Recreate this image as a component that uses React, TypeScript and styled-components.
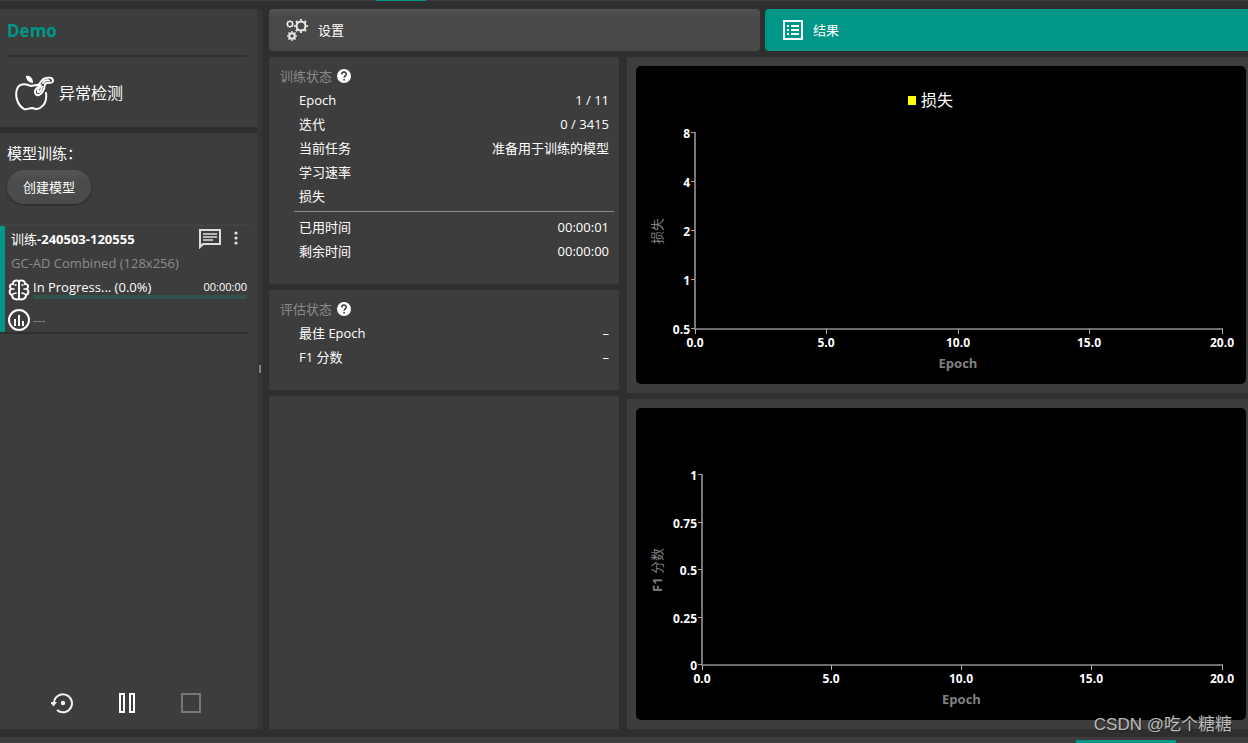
import React from "react";
import styled, { createGlobalStyle } from "styled-components";

const ACCENT = "#009688";
const PANEL = "#3d3d3d";
const DARK = "#2f2f2f";

const GlobalStyle = createGlobalStyle`
  * { box-sizing: border-box; }
  body {
    margin: 0;
    background: ${DARK};
    color: #fff;
    font: 13px/24px "Open Sans", "Noto Sans CJK SC", sans-serif;
  }
  button { font: inherit; color: inherit; border: 0; padding: 0; background: none; cursor: pointer; }
  h1, h2, dl, dd, p { margin: 0; font-size: inherit; font-weight: 400; }
  svg { display: block; flex: none; }
`;

const Page = styled.div`
  position: relative;
  min-height: 100vh;
  display: flex;
  flex-direction: column;
  overflow: hidden;
`;

const TopEdge = styled.div`
  height: 1px;
  background: ${PANEL};
  padding-left: 376px;
  &::after { content: ""; display: block; width: 50px; height: 1px; background: ${ACCENT}; }
`;

const BottomEdge = styled.div`
  height: 6px;
  background: ${PANEL};
  display: flex;
  justify-content: flex-end;
  align-items: flex-end;
  padding-right: 72px;
  &::after { content: ""; width: 100px; height: 3px; background: ${ACCENT}; }
`;

const Body = styled.div`
  flex: 1;
  display: flex;
  padding: 8px 0;
`;

const Sidebar = styled.aside`
  flex: 0 0 257px;
  display: flex;
  flex-direction: column;
  gap: 6px;
`;

const Splitter = styled.div`
  flex: 0 0 6px;
  margin-right: 6px;
  background: #353535;
  display: flex;
  align-items: center;
  justify-content: center;
  &::after { content: ""; width: 2px; height: 8px; background: #828282; }
`;

const ProjectCard = styled.section`
  height: 118px;
  background: ${PANEL};
  padding: 0 10px 0 7px;
`;

const ProjectName = styled.h1`
  height: 48px;
  line-height: 44px;
  font-size: 17px;
  font-weight: 700;
  color: ${ACCENT};
  border-bottom: 2px solid ${DARK};
`;

const ProjectType = styled.div`
  display: flex;
  align-items: center;
  gap: 4px;
  padding: 18px 0 0 8px;
  font-size: 16px;
`;

const TrainingCard = styled.section`
  flex: 1;
  display: flex;
  flex-direction: column;
  background: ${PANEL};
`;

const TrainingHead = styled.div`
  padding: 8px 7px 20px;
`;

const TrainingTitle = styled.h2`
  font-size: 15px;
  margin-bottom: 5px;
`;

const PillButton = styled.button`
  display: block;
  height: 34px;
  padding: 0 16px;
  border-radius: 17px;
  background: linear-gradient(#565656, #4b4b4b 30%, #4b4b4b);
  box-shadow: 0 1px 2px #252525;
`;

const ModelItem = styled.article`
  width: 249px;
  height: 110px;
  border-top: 2px solid #424242;
  border-bottom: 2px solid ${DARK};
  display: flex;
`;

const ActiveMark = styled.div`
  width: 5px;
  background: ${ACCENT};
`;

const ModelBody = styled.div`
  flex: 1;
  padding: 1px 2px 0 6px;
`;

const ModelRow = styled.div`
  display: flex;
  align-items: center;
  height: 24px;
`;

const ModelName = styled.div`
  flex: 1;
  b { font-weight: 700; }
`;

const IconButton = styled.button`
  display: flex;
  align-items: center;
  justify-content: center;
`;

const MoreButton = styled(IconButton)`
  padding: 0 9px 2px 13px;
`;

const ModelConfig = styled.p`
  color: #8c8c8c;
`;

const StatusRow = styled.div`
  display: flex;
  align-items: center;
  gap: 3px;
  margin-left: -3px;
  height: 30px;
`;

const Progress = styled.div`
  flex: 1;
  height: 22px;
  border-bottom: 4px solid #2e544e;
  display: flex;
  justify-content: space-between;
  line-height: 20px;
  margin-bottom: 4px;
`;

const Elapsed = styled.span`
  font-size: 11px;
`;

const Muted = styled.span`
  color: #8c8c8c;
`;

const Controls = styled.div`
  margin-top: auto;
  height: 52px;
  padding-right: 3px;
  display: flex;
  justify-content: center;
`;

const ControlButton = styled(IconButton)`
  width: 64px;
`;

const Main = styled.main`
  flex: 1;
  min-width: 0;
  display: flex;
  flex-direction: column;
  gap: 6px;
`;

const Tabs = styled.nav`
  display: grid;
  grid-template-columns: 1fr 1fr;
  gap: 5px;
  margin-right: -8px;
`;

const Tab = styled.button<{ $active?: boolean }>`
  height: 42px;
  border-radius: 4px;
  display: flex;
  align-items: center;
  gap: ${(p) => (p.$active ? 10 : 8)}px;
  padding-left: ${(p) => (p.$active ? 18 : 16)}px;
  background: ${(p) => (p.$active ? ACCENT : "linear-gradient(#525252, #494949 20%, #494949)")};
`;

const Columns = styled.div`
  flex: 1;
  display: flex;
  gap: 8px;
`;

const StatsColumn = styled.div`
  flex: 0 0 350px;
  display: flex;
  flex-direction: column;
  gap: 6px;
`;

const StatsPanel = styled.section`
  background: ${PANEL};
  padding: 7px 5px 21px 11px;
`;

const EmptyPanel = styled.div`
  flex: 1;
  background: ${PANEL};
`;

const PanelTitle = styled.h2`
  display: flex;
  align-items: center;
  gap: 5px;
  color: #8a8a8a;
`;

const StatList = styled.dl`
  margin-left: 14px;
`;

const Stat = styled.div`
  display: flex;
  justify-content: space-between;
  padding: 0 5px;
`;

const Divider = styled.hr`
  border: 0;
  height: 1px;
  margin: 3px 0 3px 14px;
  background: #8c8c8c;
`;

const ChartColumn = styled.div`
  flex: 1;
  min-width: 0;
  display: flex;
  flex-direction: column;
  gap: 6px;
`;

const ChartPanel = styled.section`
  background: ${PANEL};
  padding: 9px 2px 9px 9px;
  &:last-child { flex: 1; }
`;

const ChartSvg = styled.svg`
  width: 100%;
  height: auto;
  background: #000;
  border-radius: 5px;
  fill: #fff;
  font-size: 12px;
  font-weight: 700;
`;

const Watermark = styled.div`
  position: absolute;
  right: 16px;
  bottom: 6px;
  font: 17px/24px "Liberation Sans", "Noto Sans CJK SC", sans-serif;
  color: #b9b9b9;
  text-shadow: 1px 1px 1px #222;
`;

type ChartProps = {
  name: string;
  height: number;
  axisX: number;
  ticks: string[];
  yTitle: React.ReactNode;
  legend?: string;
};

function Chart({ name, height, axisX, ticks, yTitle, legend }: ChartProps) {
  const top = 67;
  const bottom = height - 55;
  const right = 586;
  const step = (bottom - top) / (ticks.length - 1);
  const xLabels = ["0.0", "5.0", "10.0", "15.0", "20.0"];
  const xStep = (right - axisX) / 4;
  const midX = (axisX + right) / 2;
  return (
    <ChartSvg viewBox={`0 0 610 ${height}`} role="img" aria-label={name}>
      <path d={`M${axisX - 1} ${top - 1}V${bottom + 1}`} stroke="#777" strokeWidth="2" />
      <path d={`M${axisX - 2} ${bottom}H${right + 1}`} stroke="#6c6c6c" strokeWidth="2" />
      {ticks.map((t, i) => {
        const y = Math.round(top + i * step);
        return (
          <g key={t}>
            <path d={`M${axisX - 5} ${y - 0.5}h4`} stroke="#a0a0a0" />
            <text x={axisX - 6} y={y + 5} textAnchor="end">{t}</text>
          </g>
        );
      })}
      {xLabels.map((t, i) => {
        const x = Math.floor(axisX + i * xStep) - (i < 4 ? 1 : 0);
        return (
          <g key={t}>
            <path d={`M${x + 0.5} ${bottom}v5`} stroke="#b0b0b0" />
            <text x={x} y={bottom + 18} textAnchor="middle">{t}</text>
          </g>
        );
      })}
      <text x={midX - 1} y={bottom + 39} textAnchor="middle" fontSize="13" fill="#808080">Epoch</text>
      <text
        transform={`translate(26 ${(top + bottom) / 2}) rotate(-90)`}
        textAnchor="middle" fontSize="13" fill="#808080"
      >
        {yTitle}
      </text>
      {legend && (
        <g>
          <rect x="272" y="30" width="8" height="9" fill="#ff0" />
          <text x="285" y="40" fontSize="16" fontWeight="400">{legend}</text>
        </g>
      )}
    </ChartSvg>
  );
}

const AppleIcon = () => (
  <svg width="40" height="36" viewBox="0 0 40 36" fill="none" stroke="#fff" strokeWidth="2" strokeLinecap="round">
    <path d="M22 10C19 10 18 11 16 11C12 9 6 8 3 12C-1 19 2 30 9 34C12 35 14 33 17 33C20 34 22 35 25 33C30 30 32 25 31 18" />
    <path d="M11 1C15 0 18 3 18 8C14 8 11 5 11 1Z" fill="#fff" stroke="none" />
    <path d="M22 10C26 10 25 4 31 3C36 2 38 3 38 6C38 8 35 8 32 8C28 8 31 12 28 16C26 20 22 22 20 18C19 14 23 12 26 10" />
    <path d="M23 17C24 18 27 15 27 12C25 12 22 14 23 17Z" strokeWidth="2" />
    <path d="M28 8C29 5 31 5 34 5.500" />
  </svg>
);

const ChatIcon = () => (
  <svg width="22" height="20" viewBox="0 0 22 20" fill="none" stroke="#ddd" strokeWidth="2">
    <path d="M1 18V1H21V15H4Z" />
    <path d="M4 5H18M4 8H18M4 11H14" strokeWidth="1.6" />
  </svg>
);

const DotsIcon = () => (
  <svg width="4" height="14" viewBox="0 0 4 14" fill="#e5e5e5">
    <circle cx="2" cy="2" r="1.6" /><circle cx="2" cy="7" r="1.6" /><circle cx="2" cy="12" r="1.6" />
  </svg>
);

const BrainIcon = () => (
  <svg width="22" height="22" viewBox="0 0 22 22" fill="none" stroke="#fff" strokeWidth="2" strokeLinecap="round">
    <path d="M11 2V20M11 2C9 1 5 1 5 5C2 5 1 7 3 10C1 12 1 15 4 16C4 20 8 21 11 20M11 2C13 1 17 1 17 5C20 5 21 7 19 10C21 12 21 15 18 16C18 20 14 21 11 20" />
    <path d="M3 10H6M19 10H16M7 6H8M15 6H14M5 15L8 14M17 15L14 14" strokeWidth="1.600" />
  </svg>
);

const StatsIcon = () => (
  <svg width="22" height="22" viewBox="0 0 22 22" fill="none" stroke="#fff" strokeWidth="2">
    <circle cx="11" cy="11" r="10" />
    <path d="M7 17V10M11 17V6M15 17V12" />
  </svg>
);

const RestartIcon = () => (
  <svg width="24" height="22" viewBox="0 0 24 22" fill="none" stroke="#f2f2f2" strokeWidth="2">
    <path d="M3 11A9 9 0 1 1 6 18" />
    <path d="M-1 10H6L2.500 14.500Z" fill="#f2f2f2" stroke="none" />
    <circle cx="12" cy="11" r="2.200" fill="#f2f2f2" stroke="none" />
  </svg>
);

const PauseIcon = () => (
  <svg width="16" height="20" viewBox="0 0 16 20" fill="none" stroke="#fff" strokeWidth="2">
    <path d="M1 1H5V19H1ZM11 1H15V19H11Z" />
  </svg>
);

const StopIcon = () => (
  <svg width="20" height="20" viewBox="0 0 20 20" fill="none" stroke="#777" strokeWidth="2">
    <path d="M1 1H19V19H1Z" />
  </svg>
);

type GearProps = { x: number; y: number; r: number; w: number; tooth: number };

const Gear = ({ x, y, r, w, tooth }: GearProps) => (
  <g fill="none" stroke="#eee">
    <circle cx={x} cy={y} r={r} strokeWidth={w} />
    <circle
      cx={x} cy={y} r={r + w / 2 + tooth / 2 - 0.2} strokeWidth={tooth}
      pathLength="16" strokeDasharray="0.8 1.2" strokeDashoffset="0.4"
    />
  </g>
);

const GearsIcon = () => (
  <svg width="25" height="24" viewBox="0 0 25 24">
    <Gear x={16} y={8} r={4.5} w={2} tooth={1.8} />
    <Gear x={5} y={6} r={2.6} w={1.4} tooth={0.8} />
    <Gear x={7} y={18} r={2.8} w={2} tooth={1.4} />
  </svg>
);

const ListIcon = () => (
  <svg width="20" height="20" viewBox="0 0 20 20" fill="none" stroke="#fff" strokeWidth="2">
    <path d="M1 1H19V19H1Z" />
    <path d="M4 6H6M8 6H16M4 10H6M8 10H16M4 14H6M8 14H16" />
  </svg>
);

const HelpIcon = () => (
  <svg width="14" height="14" viewBox="0 0 14 14" fill="none">
    <circle cx="7" cy="7" r="7" fill="#fff" />
    <path d="M4.800 5.400C4.800 2.300 9.300 2.400 9.300 5.200C9.300 6.900 7.100 6.900 7.100 8.700" stroke="#3d3d3d" strokeWidth="1.500" />
    <path d="M6.300 10H7.900V11.500H6.300Z" fill="#3d3d3d" />
  </svg>
);

const trainingStats: [string, string][] = [
  ["Epoch", "1 / 11"],
  ["迭代", "0 / 3415"],
  ["当前任务", "准备用于训练的模型"],
  ["学习速率", ""],
  ["损失", ""],
];
const timeStats: [string, string][] = [
  ["已用时间", "00:00:01"],
  ["剩余时间", "00:00:00"],
];
const evalStats: [string, string][] = [
  ["最佳 Epoch", "–"],
  ["F1 分数", "–"],
];

const Stats = ({ items }: { items: [string, string][] }) => (
  <StatList>
    {items.map(([label, value]) => (
      <Stat key={label}>
        <dt>{label}</dt>
        <dd>{value}</dd>
      </Stat>
    ))}
  </StatList>
);

export default function App() {
  return (
    <Page>
      <GlobalStyle />
      <TopEdge />
      <Body>
        <Sidebar>
          <ProjectCard>
            <ProjectName>Demo</ProjectName>
            <ProjectType>
              <AppleIcon />
              <span>异常检测</span>
            </ProjectType>
          </ProjectCard>
          <TrainingCard>
            <TrainingHead>
              <TrainingTitle>模型训练：</TrainingTitle>
              <PillButton>创建模型</PillButton>
            </TrainingHead>
            <ModelItem>
              <ActiveMark />
              <ModelBody>
                <ModelRow>
                  <ModelName>训练<b>-240503-120555</b></ModelName>
                  <IconButton aria-label="Comment"><ChatIcon /></IconButton>
                  <MoreButton aria-label="More"><DotsIcon /></MoreButton>
                </ModelRow>
                <ModelConfig>GC-AD Combined (128x256)</ModelConfig>
                <StatusRow>
                  <BrainIcon />
                  <Progress>
                    <span>In Progress... (0.0%)</span>
                    <Elapsed>00:00:00</Elapsed>
                  </Progress>
                </StatusRow>
                <StatusRow>
                  <StatsIcon />
                  <Muted>---</Muted>
                </StatusRow>
              </ModelBody>
            </ModelItem>
            <Controls>
              <ControlButton aria-label="Restart"><RestartIcon /></ControlButton>
              <ControlButton aria-label="Pause"><PauseIcon /></ControlButton>
              <ControlButton aria-label="Stop"><StopIcon /></ControlButton>
            </Controls>
          </TrainingCard>
        </Sidebar>
        <Splitter />
        <Main>
          <Tabs>
            <Tab><GearsIcon />设置</Tab>
            <Tab $active><ListIcon />结果</Tab>
          </Tabs>
          <Columns>
            <StatsColumn>
              <StatsPanel>
                <PanelTitle>训练状态 <HelpIcon /></PanelTitle>
                <Stats items={trainingStats} />
                <Divider />
                <Stats items={timeStats} />
              </StatsPanel>
              <StatsPanel>
                <PanelTitle>评估状态 <HelpIcon /></PanelTitle>
                <Stats items={evalStats} />
              </StatsPanel>
              <EmptyPanel />
            </StatsColumn>
            <ChartColumn>
              <ChartPanel>
                <Chart
                  name="损失" height={318} axisX={60} legend="损失"
                  ticks={["8", "4", "2", "1", "0.5"]}
                  yTitle={<tspan fontWeight="400">损失</tspan>}
                />
              </ChartPanel>
              <ChartPanel>
                <Chart
                  name="F1 分数" height={312} axisX={67}
                  ticks={["1", "0.75", "0.5", "0.25", "0"]}
                  yTitle={<>F1 <tspan fontWeight="400">分数</tspan></>}
                />
              </ChartPanel>
            </ChartColumn>
          </Columns>
        </Main>
      </Body>
      <BottomEdge />
      <Watermark>CSDN @吃个糖糖</Watermark>
    </Page>
  );
}
